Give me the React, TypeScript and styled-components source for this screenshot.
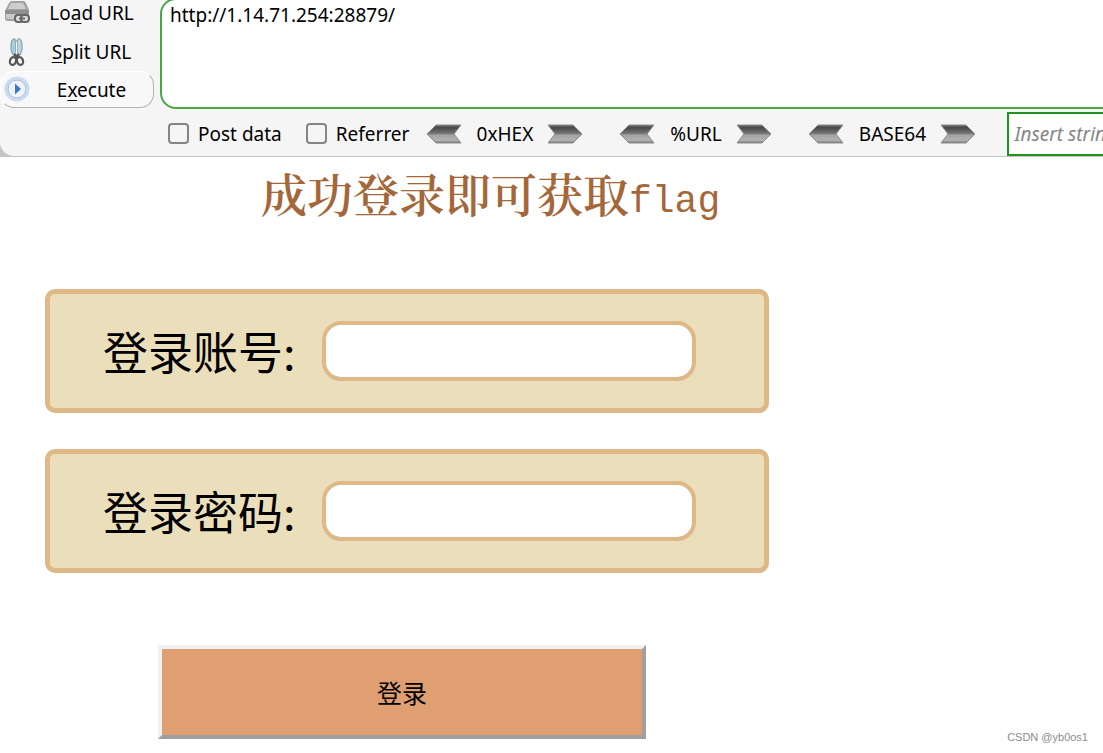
import React from 'react';
import styled, { createGlobalStyle } from 'styled-components';

const GlobalStyle = createGlobalStyle`
  * { box-sizing: border-box; }
  body {
    margin: 0;
    background: #fff;
    color: #000;
    font-family: "Noto Sans", "Noto Sans CJK SC", sans-serif;
  }
  button, input, textarea { font: inherit; color: inherit; }
`;

const Page = styled.div`
  position: relative;
  min-height: 100vh;
  overflow: hidden;
`;

const Corner = styled.div`
  background: #c4c4c4;
  border-bottom: 1px solid #c6c6c6;
`;

const Toolbar = styled.header`
  display: flex;
  height: 156px;
  overflow: hidden;
  background: #f5f5f5;
  border-bottom-left-radius: 14px;
  font-size: 19px;
`;

const Actions = styled.nav`
  flex: none;
  width: 154px;
  margin-right: 6px;
  padding-bottom: 48px;
  display: flex;
  flex-direction: column;
  justify-content: flex-end;
`;

const ActionButton = styled.button<{ $raised?: boolean }>`
  display: flex;
  align-items: center;
  flex: none;
  height: ${p => (p.$raised ? 37 : 39)}px;
  padding: 0 0 0 3px;
  border: 1px solid transparent;
  border-radius: 14px;
  background: ${p => (p.$raised ? '#f8f8f8' : 'transparent')};
  border-color: ${p => (p.$raised ? '#fff #b4b4b4 #b4b4b4 #fff' : 'transparent')};
  line-height: 26px;

  svg { flex: none; }
`;

const ActionText = styled.span`
  flex: 1;
  padding-right: 2px;
  text-align: center;
`;

const Mnemonic = styled.span`
  text-decoration: underline;
  text-decoration-thickness: 1px;
  text-underline-offset: 3px;
`;

const Main = styled.div`
  flex: 1;
  min-width: 0;
  display: flex;
  flex-direction: column;
`;

const UrlBox = styled.textarea`
  flex: none;
  height: 111px;
  margin: -2px -16px 0 0;
  padding: 2px 8px;
  border: 2px solid #48a548;
  border-radius: 16px;
  background: #fff;
  outline: none;
  resize: none;
  overflow: hidden;
  font-size: 19px;
  line-height: 26px;
`;

const Options = styled.div`
  flex: 1;
  display: flex;
  align-items: center;
  padding: 2px 0 0 8px;
  white-space: nowrap;
`;

const OptionGroup = styled.div`
  flex: none;
  display: flex;
  gap: 24px;
  margin-right: 17px;
`;

const Option = styled.label`
  display: flex;
  align-items: center;
  gap: 9px;
  line-height: 26px;
`;

const Tick = styled.input`
  appearance: none;
  width: 21px;
  height: 21px;
  margin: 0;
  border: 2px solid #858585;
  border-radius: 4px;
  background: #f5f5f5;
`;

const CodecGroup = styled.div`
  flex: none;
  display: flex;
  gap: 36px;
  margin-right: 31px;
`;

const Codec = styled.div<{ $width: number }>`
  display: flex;
  align-items: center;
  justify-content: space-between;
  width: ${p => p.$width}px;
  line-height: 26px;
`;

const ArrowButton = styled.button`
  display: flex;
  padding: 0;
  border: 0;
  background: none;
`;

const InsertBox = styled.input`
  flex: none;
  width: 200px;
  height: 44px;
  padding: 0 5px;
  border: 2px solid #219321;
  background: #fff;
  outline: none;
  font-size: 19px;
  &::placeholder { color: #858585; font-style: italic; opacity: 1; }
`;

const Login = styled.form`
  width: 724px;
  max-width: calc(100% - 90px);
  margin-left: 45px;
  display: flex;
  flex-direction: column;
`;

const Title = styled.h1`
  margin: 7px 0 59px;
  padding-left: 216px;
  color: #a4673a;
  font: 600 46px/56px "Noto Serif CJK SC", "Noto Sans CJK SC", serif;
  white-space: nowrap;
`;

const TitleLatin = styled.span`
  font-family: "Liberation Mono", monospace;
  font-size: 38px;
  font-weight: 400;
`;

const Field = styled.div`
  display: flex;
  align-items: center;
  height: 124px;
  margin-bottom: 36px;
  padding: 0 68px 0 53px;
  border: 5px solid #deb887;
  border-radius: 10px;
  background: #ebdfbb;
`;

const FieldLabel = styled.label`
  flex: none;
  width: 219px;
  font-family: "Noto Sans CJK SC", sans-serif;
  font-size: 45px;
  line-height: 60px;
  white-space: nowrap;
`;

const FieldInput = styled.input`
  flex: 1;
  min-width: 0;
  height: 60px;
  padding: 0 16px;
  border: 4px solid #deb887;
  border-radius: 19px;
  background: #fff;
  outline: none;
  font-size: 26px;
`;

const Submit = styled.button`
  width: 488px;
  height: 94px;
  margin: 36px 0 12px 113px;
  border: 4px solid;
  border-color: #f0f0f0 #a0a0a0 #a0a0a0 #f0f0f0;
  background: #df9f71;
  font-family: "Noto Sans CJK SC", sans-serif;
  font-size: 25px;
`;

const Credit = styled.small`
  position: absolute;
  right: 15px;
  bottom: 8px;
  color: #8c8c8c;
  font: 11px/16px "Liberation Sans", sans-serif;
`;

const DriveIcon = () => (
  <svg width="28" height="28" viewBox="0 0 28 28" aria-hidden="true">
    <path d="M5 4q1-2 3-2h11q2 0 3 2l3 7v8q0 3-3 3H4q-3 0-3-3v-7z" fill="#a2a2a2" />
    <path d="M7 4h12l3 6H4z" fill="#cdcdcd" />
    <path d="M1 11h24v4H1z" fill="#8f8f8f" />
    <path d="M2 15h10v5H4q-2 0-2-2z" fill="#c8c8c8" />
    <g fill="#ddd" stroke="#666" strokeWidth="2">
      <rect x="11" y="16" width="8" height="7" rx="3" />
      <rect x="17" y="16" width="8" height="7" rx="3" />
      <path d="M15 19.500h6" />
    </g>
  </svg>
);

const ScissorsIcon = () => (
  <svg width="28" height="30" viewBox="0 0 28 30" aria-hidden="true">
    <path d="M8 3q3-3 4 1v14H9l-2-5V7z" fill="#a9ccda" stroke="#7996a3" />
    <path d="M17 3q-3-3-4 1v14h3l2-5V7z" fill="#bad7e1" stroke="#7996a3" />
    <path d="M12.500 5v12" stroke="#f0f6f8" />
    <g fill="none" stroke="#555" strokeWidth="2.200">
      <path d="M10 17l2.500 3 2.500-3" />
      <ellipse cx="9" cy="24" rx="3" ry="4" transform="rotate(18 9 24)" />
      <ellipse cx="16" cy="24" rx="3" ry="4" transform="rotate(-18 16 24)" />
    </g>
  </svg>
);

const PlayIcon = () => (
  <svg width="28" height="28" viewBox="0 0 28 28" aria-hidden="true">
    <circle cx="13" cy="13" r="11" fill="#f0f5fc" stroke="#c8dbf3" strokeWidth="3" />
    <circle cx="13" cy="13" r="9" fill="#eff3f8" stroke="#9fb9da" />
    <path d="M11 7.500l6 5.500-6 5.500z" fill="#3979c5" />
  </svg>
);

const Arrow = ({ flip }: { flip?: boolean }) => {
  const id = flip ? 'arrow-left' : 'arrow-right';
  return (
    <svg width="36" height="20" viewBox="0 0 36 20" aria-hidden="true">
      <defs>
        <linearGradient id={id} x2="0" y2="1">
          <stop offset="0" stopColor="#6e6e6e" />
          <stop offset="0.150" stopColor="#484848" />
          <stop offset="0.480" stopColor="#777" />
          <stop offset="0.550" stopColor="#a2a2a2" />
          <stop offset="0.850" stopColor="#b2b2b2" />
          <stop offset="1" stopColor="#777" />
        </linearGradient>
      </defs>
      <path
        d="M1 1h25l9 9-9 9H1l7-9z"
        fill={`url(#${id})`}
        stroke="#8b8b8b"
        transform={flip ? 'translate(36 0) scale(-1 1)' : undefined}
      />
    </svg>
  );
};

const codecs = [
  { name: '0xHEX', width: 157 },
  { name: '%URL', width: 153 },
  { name: 'BASE64', width: 168 },
];

export default function App() {
  return (
    <Page>
      <GlobalStyle />
      <Corner>
        <Toolbar>
          <Actions>
            <ActionButton type="button">
              <DriveIcon />
              <ActionText>Lo<Mnemonic>a</Mnemonic>d URL</ActionText>
            </ActionButton>
            <ActionButton type="button">
              <ScissorsIcon />
              <ActionText><Mnemonic>S</Mnemonic>plit URL</ActionText>
            </ActionButton>
            <ActionButton type="button" $raised>
              <PlayIcon />
              <ActionText>E<Mnemonic>x</Mnemonic>ecute</ActionText>
            </ActionButton>
          </Actions>
          <Main>
            <UrlBox aria-label="URL" spellCheck={false} defaultValue="http://1.14.71.254:28879/" />
            <Options>
              <OptionGroup>
                <Option><Tick type="checkbox" />Post data</Option>
                <Option><Tick type="checkbox" />Referrer</Option>
              </OptionGroup>
              <CodecGroup>
                {codecs.map(c => (
                  <Codec key={c.name} $width={c.width}>
                    <ArrowButton type="button" aria-label={`Decode ${c.name}`}><Arrow flip /></ArrowButton>
                    <span>{c.name}</span>
                    <ArrowButton type="button" aria-label={`Encode ${c.name}`}><Arrow /></ArrowButton>
                  </Codec>
                ))}
              </CodecGroup>
              <InsertBox aria-label="Insert string" placeholder="Insert string to replace" />
            </Options>
          </Main>
        </Toolbar>
      </Corner>
      <Login onSubmit={e => e.preventDefault()}>
        <Title>成功登录即可获取<TitleLatin>flag</TitleLatin></Title>
        <Field>
          <FieldLabel htmlFor="account">登录账号:</FieldLabel>
          <FieldInput id="account" type="text" />
        </Field>
        <Field>
          <FieldLabel htmlFor="password">登录密码:</FieldLabel>
          <FieldInput id="password" type="password" />
        </Field>
        <Submit type="submit">登录</Submit>
      </Login>
      <Credit>CSDN @yb0os1</Credit>
    </Page>
  );
}
